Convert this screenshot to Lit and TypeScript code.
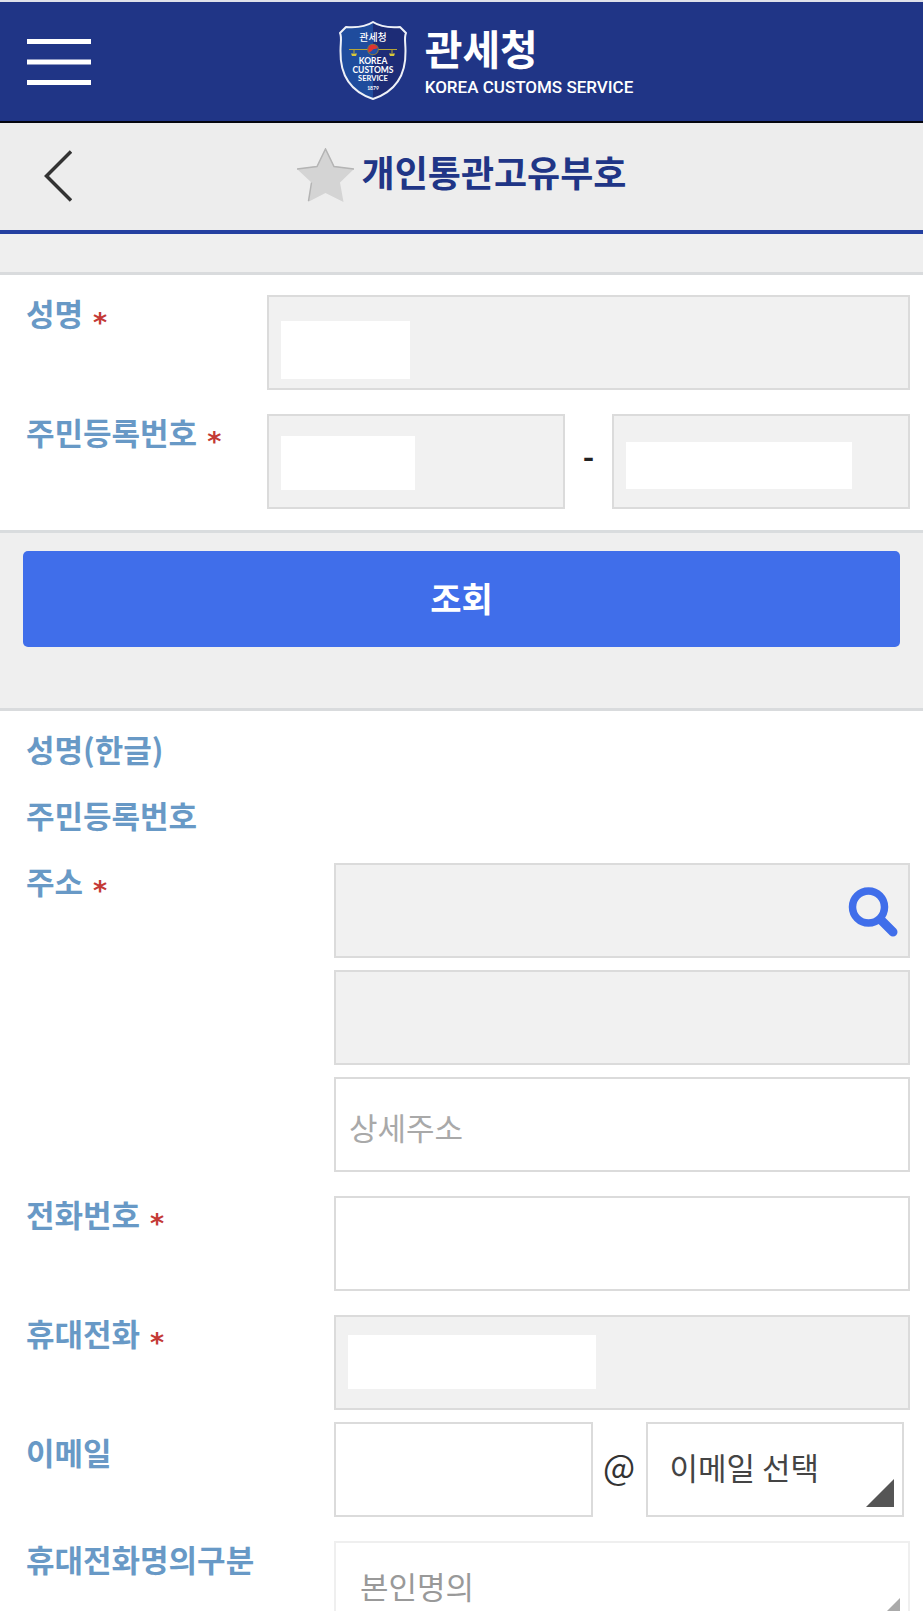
import { LitElement, html, css, svg, nothing } from "lit";
import { customElement } from "lit/decorators.js";

const shield = svg`
  <path d="M35 2 C29 6 21 8 8 7 L2 13 C4 17 2.500 22 2.500 31 C2 56 14 72 35 79 Z" fill="#1f4c9d" />
  <path d="M35 2 C41 6 49 8 62 7 L68 13 C66 17 67.500 22 67.500 31 C68 56 56 72 35 79 Z" fill="#1d2c76" />
  <path d="M35 2 C29 6 21 8 8 7 L2 13 C4 17 2.500 22 2.500 31 C2 56 14 72 35 79 C56 72 68 56 67.500 31 C67.500 22 66 17 68 13 L62 7 C49 8 41 6 35 2 Z"
    fill="none" stroke="#eef1f8" stroke-width="2" stroke-linejoin="round" />
  <path d="M11 29.500 H59 M16 30 V33 M54 30 V33" stroke="#b5a436" stroke-width="1" fill="none" />
  <path d="M13 33.500 H19 L18 36 H14 Z M51 33.500 H57 L56 36 H52 Z" fill="#d8c83a" />
  <circle cx="35" cy="29.500" r="5.800" fill="#8d7a3a" />
  <circle cx="35" cy="29.500" r="4.800" fill="#2450a8" />
  <path d="M30.500 31.500 A4.800 4.800 0 0 1 39.500 27.500 C38 30 36 28 34.500 30 C33 32 31.500 32.500 30.500 31.500 Z" fill="#e0342f" />
`;

@customElement("app-root")
export class AppRoot extends LitElement {
  static styles = css`
    :host {
      display: block;
      background: #fff;
      color: #333;
      font-family: "Noto Sans CJK KR", "Noto Sans", sans-serif;
      font-size: 31px;
      line-height: 36px;
    }
    * {
      box-sizing: border-box;
    }
    button {
      border: 0;
      background: none;
      padding: 0;
      font: inherit;
      color: inherit;
      cursor: pointer;
    }
    svg {
      display: block;
    }

    .header {
      display: grid;
      grid-template-columns: 118px 1fr 70px;
      align-items: center;
      height: 123px;
      border-top: 2px solid #dfe1ea;
      border-bottom: 2px solid #05060f;
      background: #203586;
    }
    .menu {
      justify-self: start;
      margin-left: 27px;
    }
    .brand {
      display: flex;
      justify-content: center;
      align-items: center;
      gap: 17px;
      color: #fff;
      text-decoration: none;
    }
    .crest {
      margin-bottom: 2px;
    }
    .crest text {
      fill: #fff;
      text-anchor: middle;
      font-family: Lato, sans-serif;
      font-weight: 700;
    }
    .crest .crest-ko {
      font-family: "Noto Sans CJK KR", sans-serif;
      font-weight: 500;
    }
    .wordmark {
      display: grid;
      gap: 4px;
      padding-bottom: 2px;
    }
    .brand-ko {
      font-size: 41px;
      font-weight: 700;
      line-height: 48px;
    }
    .brand-en {
      font-family: Roboto, sans-serif;
      font-size: 17px;
      font-weight: 500;
      line-height: 24px;
    }

    .titlebar {
      display: grid;
      grid-template-columns: 72px 1fr 72px;
      align-items: center;
      height: 111px;
      padding-bottom: 2px;
      border-bottom: 4px solid #2440a0;
      background: #ededed;
    }
    .back {
      justify-self: end;
    }
    .title {
      display: flex;
      justify-content: center;
      align-items: center;
      gap: 8px;
    }
    h1 {
      margin: 0;
      padding-bottom: 10px;
      color: #203586;
      font-size: 36px;
      font-weight: 700;
      line-height: 48px;
    }

    .spacer {
      height: 38px;
      background: #efefef;
    }
    .panel {
      padding: 8px 13px 9px 26px;
      border-top: 3px solid #d9dbdd;
    }
    .row {
      display: grid;
      min-height: 66px;
      padding: 12px 0;
    }
    .search .row {
      grid-template-columns: 241px 1fr;
    }
    .details .row {
      grid-template-columns: 308px 1fr;
    }
    .label {
      color: #6899c6;
      font-weight: 700;
    }
    .required {
      margin-left: 10px;
      color: #c43a36;
      font-family: "DejaVu Sans", sans-serif;
      font-size: 27px;
      font-weight: 700;
      line-height: 0;
      vertical-align: -6px;
    }
    .stack {
      display: grid;
      gap: 12px;
    }
    .field {
      position: relative;
      min-width: 0;
    }
    .control {
      display: block;
      width: 100%;
      height: 95px;
      margin: 0;
      padding: 4px 13px 0;
      border: 2px solid #dbdbdb;
      border-radius: 0;
      outline: 0;
      background: #fff;
      color: #444;
      font: inherit;
      appearance: none;
    }
    .control:read-only:not(select) {
      background: #f1f1f1;
    }
    .control::placeholder {
      color: #a9a9a9;
      opacity: 1;
    }
    select.control {
      padding: 0 22px 6px;
    }
    select.control:disabled {
      padding: 0 24px 6px;
      border-color: #efefef;
      color: #999;
      opacity: 1;
    }
    .corner {
      position: absolute;
      right: 10px;
      bottom: 10px;
      pointer-events: none;
      fill: #555;
    }
    select:disabled + .corner {
      fill: #aaa;
    }
    .mask {
      position: absolute;
      left: 14px;
      background: #fff;
    }
    .mask-name {
      top: 26px;
      width: 129px;
      height: 58px;
    }
    .mask-birth {
      top: 22px;
      width: 134px;
      height: 54px;
    }
    .mask-serial {
      top: 28px;
      width: 226px;
      height: 47px;
    }
    .mask-mobile {
      top: 20px;
      width: 248px;
      height: 54px;
    }
    .split {
      display: grid;
      grid-template-columns: 1fr 47px 1fr;
      align-items: center;
      text-align: center;
    }
    .dash {
      padding-bottom: 14px;
      color: #222;
      font-weight: 700;
    }
    .email {
      grid-template-columns: 1fr 53px 1fr;
      margin: -12px 6px 0 0;
    }
    .at {
      padding-bottom: 8px;
      font-size: 34px;
    }
    .lookup {
      position: absolute;
      right: 11px;
      top: 23px;
    }

    .actions {
      padding: 18px 23px 61px;
      border-top: 3px solid #d9dcde;
      background: #efefef;
    }
    .submit {
      display: block;
      width: 100%;
      height: 96px;
      padding-bottom: 2px;
      border-radius: 5px;
      background: #406eea;
      color: #fff;
      font-size: 34px;
      font-weight: 700;
    }
  `;

  private label(text: string, id?: string, required = false) {
    const star = required ? html`<span class="required">*</span>` : nothing;
    return id
      ? html`<label class="label" for=${id}>${text}${star}</label>`
      : html`<span class="label">${text}</span>`;
  }

  private corner() {
    return html`<svg class="corner" width="28" height="28" viewBox="0 0 28 28" aria-hidden="true">
      <path d="M28 0 V28 H0 Z" />
    </svg>`;
  }

  render() {
    return html`
      <header class="header">
        <button class="menu" type="button" aria-label="메뉴">
          <svg width="64" height="46" viewBox="0 0 64 46">
            <path d="M0 2.500 H64 M0 23 H64 M0 43.500 H64" stroke="#fff" stroke-width="5" />
          </svg>
        </button>
        <a class="brand" href="#">
          <svg class="crest" width="70" height="82" viewBox="0 0 70 82">
            ${shield}
            <text class="crest-ko" x="35" y="21" font-size="10">관세청</text>
            <text x="35" y="43.500" font-size="8.500">KOREA</text>
            <text x="35" y="52.500" font-size="8.500">CUSTOMS</text>
            <text x="35" y="60.500" font-size="7.500">SERVICE</text>
            <text x="35" y="69.500" font-size="5">1879</text>
          </svg>
          <span class="wordmark">
            <span class="brand-ko">관세청</span>
            <span class="brand-en">KOREA CUSTOMS SERVICE</span>
          </span>
        </a>
      </header>

      <div class="titlebar">
        <button class="back" type="button" aria-label="이전">
          <svg width="28" height="52" viewBox="0 0 28 52">
            <path d="M27 1.500 L2.500 26 L27 50.500" fill="none" stroke="#333" stroke-width="3.500" />
          </svg>
        </button>
        <div class="title">
          <svg width="57" height="55" viewBox="0 0 57 55" aria-hidden="true">
            <path d="M28.500 0 L37 18 L57 21 L43 34.500 L46.500 54 L28.500 45 L11 54 L14.500 34.500 L0 21 L20 18 Z" fill="#d4d4d4" />
            <path d="M11.500 53 L14.500 34.500 M0 21 L20 18.500 L28.500 1 L37 18.500 L57 21" fill="none" stroke="#b4b4b4" stroke-width="1.500" />
          </svg>
          <h1>개인통관고유부호</h1>
        </div>
      </div>

      <main>
        <div class="spacer"></div>
        <form>
          <section class="panel search">
            <div class="row">
              ${this.label("성명", "name", true)}
              <div class="field">
                <input class="control" id="name" readonly />
                <span class="mask mask-name"></span>
              </div>
            </div>
            <div class="row">
              ${this.label("주민등록번호", "birth", true)}
              <div class="split">
                <div class="field">
                  <input class="control" id="birth" readonly />
                  <span class="mask mask-birth"></span>
                </div>
                <span class="dash">-</span>
                <div class="field">
                  <input class="control" aria-label="주민등록번호 뒷자리" readonly />
                  <span class="mask mask-serial"></span>
                </div>
              </div>
            </div>
          </section>

          <section class="actions">
            <button class="submit" type="button">조회</button>
          </section>

          <section class="panel details">
            <div class="row">${this.label("성명(한글)")}</div>
            <div class="row">${this.label("주민등록번호")}</div>
            <div class="row">
              ${this.label("주소", "address", true)}
              <div class="stack">
                <div class="field">
                  <input class="control" id="address" readonly />
                  <button class="lookup" type="button" aria-label="주소 검색">
                    <svg width="52" height="52" viewBox="0 0 52 52">
                      <circle cx="21.500" cy="21" r="16" fill="none" stroke="#406eea" stroke-width="7.500" />
                      <path d="M34 34 L46 46" stroke="#406eea" stroke-width="9" stroke-linecap="round" />
                    </svg>
                  </button>
                </div>
                <input class="control" aria-label="기본주소" readonly />
                <input class="control" aria-label="상세주소" placeholder="상세주소" />
              </div>
            </div>
            <div class="row">
              ${this.label("전화번호", "phone", true)}
              <input class="control" id="phone" type="tel" />
            </div>
            <div class="row">
              ${this.label("휴대전화", "mobile", true)}
              <div class="field">
                <input class="control" id="mobile" type="tel" readonly />
                <span class="mask mask-mobile"></span>
              </div>
            </div>
            <div class="row">
              ${this.label("이메일", "email")}
              <div class="split email">
                <input class="control" id="email" />
                <span class="at">@</span>
                <div class="field">
                  <select class="control" aria-label="이메일 선택">
                    <option>이메일 선택</option>
                  </select>
                  ${this.corner()}
                </div>
              </div>
            </div>
            <div class="row">
              ${this.label("휴대전화명의구분", "owner")}
              <div class="field">
                <select class="control" id="owner" disabled>
                  <option>본인명의</option>
                </select>
                ${this.corner()}
              </div>
            </div>
          </section>
        </form>
      </main>
    `;
  }
}
